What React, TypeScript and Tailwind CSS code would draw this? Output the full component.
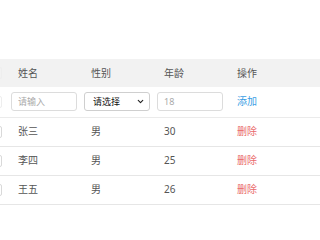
import { ChevronDown } from "lucide-react";

const rows = [
  { name: "张三", sex: "男", age: 30 },
  { name: "李四", sex: "男", age: 25 },
  { name: "王五", sex: "男", age: 26 },
];

function Box({ light }: { light?: boolean }) {
  return (
    <span
      className={`block w-[12px] h-[12px] rounded-[2px] border ${light ? "border-[#eeeeee]" : "border-[#d9d9d9]"}`}
    />
  );
}

export default function App() {
  return (
    <div
      className="w-full h-[215px] overflow-hidden bg-white pt-[59px] text-[10px] text-[#555]"
      style={{ fontFamily: '"Noto Sans", "Noto Sans CJK SC", sans-serif' }}
    >
      <table className="table-fixed border-collapse ml-[-16px] w-[calc(100%+16px)]">
        <colgroup>
          <col className="w-[20px]" />
          <col className="w-[73px]" />
          <col className="w-[73px]" />
          <col className="w-[73px]" />
          <col />
        </colgroup>
        <thead>
          <tr className="h-[28px] bg-[#f2f2f2]">
            <th className="pl-[6px] font-normal">
              <Box light />
            </th>
            <th className="pl-[14px] pt-[1px] text-left font-normal">姓名</th>
            <th className="pl-[14px] pt-[1px] text-left font-normal">性别</th>
            <th className="pl-[14px] pt-[1px] text-left font-normal">年龄</th>
            <th className="pl-[14px] pt-[1px] text-left font-normal">操作</th>
          </tr>
        </thead>
        <tbody>
          {/* Add row */}
          <tr className="h-[30px] border-b border-[#ebebeb]">
            <td className="pl-[6px]">
              <Box light />
            </td>
            <td className="pl-[7px]">
              <input
                placeholder="请输入"
                className="w-[66px] h-[19px] rounded-[3px] border border-[#dcdcdc] px-[6px] text-[9px] placeholder:text-[#aaa] outline-none"
              />
            </td>
            <td className="pl-[7px]">
              <div className="w-[66px] h-[19px] rounded-[3px] border border-[#cfcfcf] pl-[8px] pr-[4px] flex items-center justify-between text-[9px] text-[#111]">
                <span>请选择</span>
                <ChevronDown className="w-[9px] h-[9px] text-[#222]" strokeWidth={3} />
              </div>
            </td>
            <td className="pl-[7px]">
              <input
                placeholder="18"
                className="w-[66px] h-[19px] rounded-[3px] border border-[#dcdcdc] px-[6px] text-[9px] placeholder:text-[#aaa] outline-none"
              />
            </td>
            <td className="pl-[14px] text-[#3a9ee4]">添加</td>
          </tr>
          {rows.map((r) => (
            <tr key={r.name} className="h-[29px] border-b border-[#e6e6e6]">
              <td className="pl-[6px]">
                <Box />
              </td>
              <td className="pl-[14px]">{r.name}</td>
              <td className="pl-[14px]">{r.sex}</td>
              <td className="pl-[14px]">{r.age}</td>
              <td className="pl-[14px] text-[#ea6b6b]">删除</td>
            </tr>
          ))}
        </tbody>
      </table>
    </div>
  );
}
